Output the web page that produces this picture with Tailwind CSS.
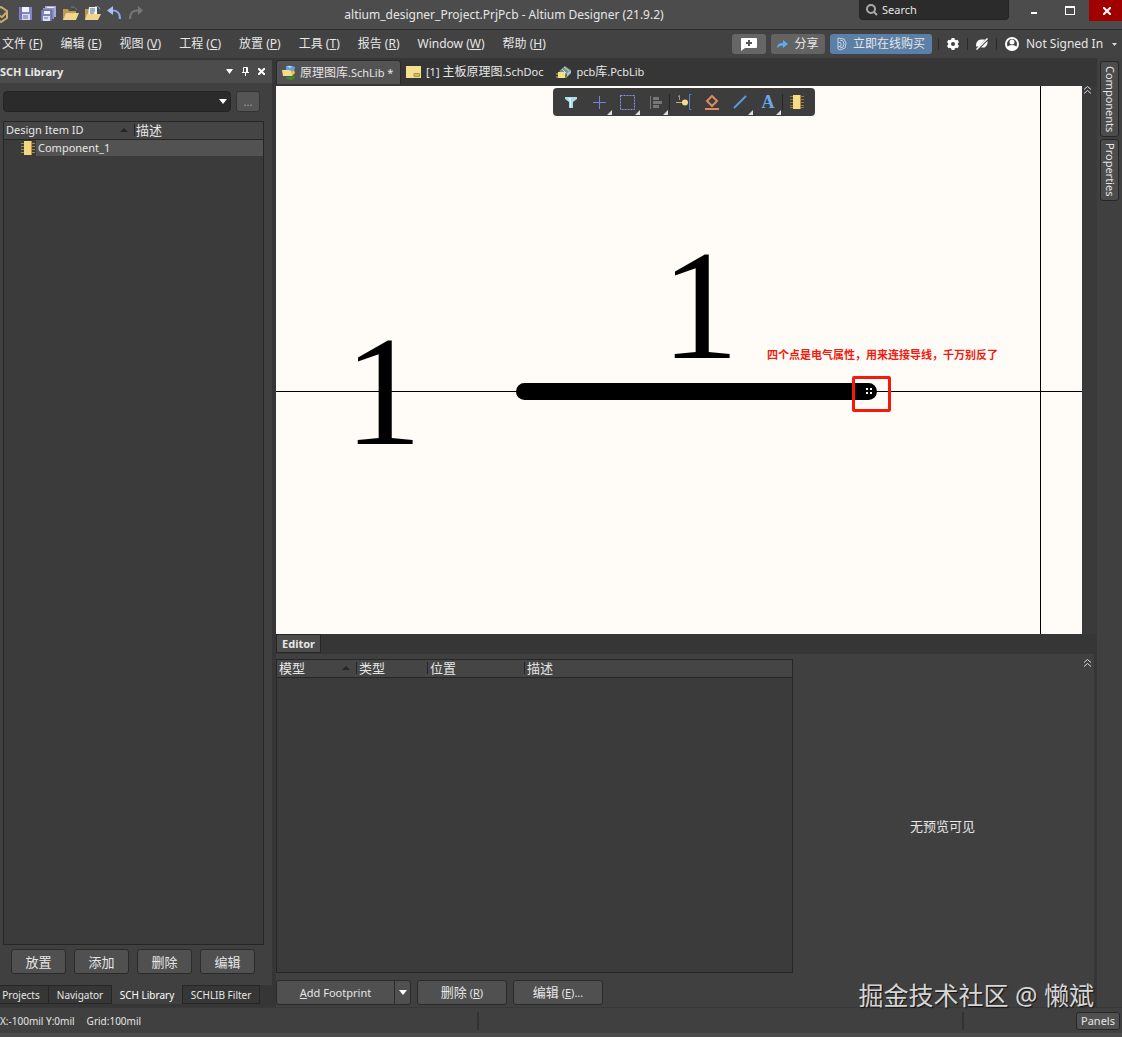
<!DOCTYPE html>
<html lang="zh-CN">
<head>
    <meta charset="UTF-8">
    <meta name="viewport" content="width=device-width, initial-scale=1.0">
    <title>altium_designer_Project.PrjPcb - Altium Designer (21.9.2)</title>
    <script src="https://cdn.jsdelivr.net/npm/@tailwindcss/browser@4"></script>
</head>
<body class="h-screen flex flex-col overflow-hidden bg-[#404040] text-[#e6e6e6] text-[11px] leading-4 font-['Noto_Sans','Noto_Sans_CJK_SC',sans-serif]">

    <!-- Title bar -->
    <header class="relative h-[30px] shrink-0 flex items-start justify-between bg-[#4c4c4c] border-b border-[#2c2c2c]">
        <div class="flex items-center h-7">
            <svg class="w-2 h-5 mr-[11px]" viewBox="0 0 8 20" fill="none" stroke="#c9ad6c" stroke-width="2"><path d="M-5 6 L1 3 L7 7 V14 L1 18 L-5 14 M-2 11 L2 13 L7 8"/></svg>
            <button aria-label="Save" class="w-[22px]"><svg class="size-4" viewBox="0 0 16 16"><path d="M0 1h13v13H0z" fill="#8286c4"/><path d="M3 1h7v5H3z" fill="#f4f4f8"/><path d="M3 8h8v6H3z" fill="#d9dcf0"/><path d="M4 10h5M4 12h5" stroke="#6668a5"/><path d="M2 1v12" stroke="#5d61a8"/></svg></button>
            <button aria-label="Save all" class="w-[22px]"><svg class="size-4" viewBox="0 0 16 16"><path d="M4 0h11v11H4z" fill="#a6a9da"/><path d="M6 1h7v2H6z" fill="#eef"/><path d="M2 2h11v11H2z" fill="#9094cf"/><path d="M0 4h11v11H0z" fill="#7c80c2" stroke="#4b4c77" stroke-width=".5"/><path d="M3 5h6v3H3z" fill="#f4f4f8"/><path d="M2 10h7v5H2z" fill="#dde0f2"/><path d="M3 12h4" stroke="#6668a5"/></svg></button>
            <button aria-label="Open" class="w-[22px]"><svg class="size-4" viewBox="0 0 16 16"><path d="M0 3h5l1 2h7v9H0z" fill="#b9985a"/><path d="M3 7h13l-3 7H0z" fill="#f0d58e"/><path d="M8 1q4-1 6 3" fill="none" stroke="#63809c"/></svg></button>
            <button aria-label="Open project" class="w-[22px]"><svg class="size-4" viewBox="0 0 16 16"><path d="M0 3h4v11H0z" fill="#b9985a"/><path d="M4 1h8v9H3z" fill="#f2f4f6"/><path d="M5 3h5M5 5h5M5 7h4" stroke="#567"/><path d="M2 8h14l-3 6H0z" fill="#f0d58e"/><path d="M10 .5q4-1 5 3" fill="none" stroke="#7aa5d0"/></svg></button>
            <button aria-label="Undo" class="w-[22px]"><svg class="size-4" viewBox="0 0 16 16" fill="none"><path d="M4 4.500q9-1 9 8.500" stroke="#88a9ee" stroke-width="2"/><path d="M0 4.500L6 0v9z" fill="#a9bff5"/></svg></button>
            <button aria-label="Redo" class="w-[22px]"><svg class="size-4" viewBox="0 0 16 16" fill="none"><path d="M10 4.500q-9-1-9 8.500" stroke="#777" stroke-width="2"/><path d="M14 4.500L9 0v9z" fill="#777"/></svg></button>
        </div>
        <h1 class="absolute inset-x-0 top-[6px] mx-auto w-fit pr-[114px] text-[12px] leading-[18px] whitespace-nowrap">altium_designer_Project.PrjPcb - Altium Designer (21.9.2)</h1>
        <div class="flex">
            <label class="flex items-center gap-1 w-[150px] h-5 pl-[6px] pr-2 rounded-b bg-[#2b2b2b] border border-t-0 border-[#242424]">
                <svg class="size-3 shrink-0" viewBox="0 0 12 12" fill="none" stroke="#aaa"><circle cx="5" cy="5" r="4" stroke-width="2"/><path d="M8 8l3 3" stroke-width="2"/></svg>
                <input type="text" aria-label="Search" placeholder="Search" class="w-full bg-transparent outline-none placeholder:text-[#e6e6e6]">
            </label>
            <button aria-label="Minimize" class="ml-[7px] w-9 h-[21px] flex justify-center items-end pb-[7px]"><span class="w-[6px] h-[2px] bg-white"></span></button>
            <button aria-label="Maximize" class="w-9 h-[21px] mr-px flex justify-center items-center"><span class="w-[10px] h-[9px] border border-t-2 border-white"></span></button>
            <button aria-label="Close" class="w-[33px] h-[21px] flex justify-center items-center bg-[#a00000]"><svg class="w-2 h-2 ml-[2px]" viewBox="0 0 8 8" stroke="#fff" stroke-width="2"><path d="M0 0l8 8M8 0l-8 8"/></svg></button>
        </div>
    </header>

    <!-- Menu bar -->
    <div class="h-[28px] shrink-0 flex items-center justify-between bg-[#424242] text-[12px]">
        <nav class="flex gap-[18px] pl-[2px] whitespace-nowrap">
            <button>文件 (<u>F</u>)</button>
            <button>编辑 (<u>E</u>)</button>
            <button>视图 (<u>V</u>)</button>
            <button>工程 (<u>C</u>)</button>
            <button>放置 (<u>P</u>)</button>
            <button>工具 (<u>T</u>)</button>
            <button>报告 (<u>R</u>)</button>
            <button>Window (<u>W</u>)</button>
            <button>帮助 (<u>H</u>)</button>
        </nav>
        <div class="flex items-center pr-[5px] whitespace-nowrap">
            <button aria-label="Comment" class="w-[34px] h-5 mr-[5px] flex items-center justify-center rounded-[3px] bg-[#666]"><svg class="w-4 h-[13px]" viewBox="0 0 16 13"><path d="M1 0h14a1 1 0 0 1 1 1v8a1 1 0 0 1-1 1H4l-4 3V1a1 1 0 0 1 1-1z" fill="#fff"/><path d="M8 2v6M5 5h6" stroke="#555" stroke-width="2"/></svg></button>
            <button class="w-[54px] h-5 mr-[5px] flex items-center justify-center gap-[6px] rounded-[3px] bg-[#636363]"><svg class="w-[11px] h-[10px]" viewBox="0 0 11 10"><path d="M0 9q0-5 6-5V1l5 4-5 4V6.500q-4 0-6 2.500z" fill="#5aaef0"/></svg>分享</button>
            <button class="w-[102px] h-5 mr-[6px] flex items-center justify-center gap-[6px] rounded-[3px] bg-[#5b7fa6]"><svg class="w-[10px] h-[14px]" viewBox="0 0 10 14" fill="none" stroke="#c3d3e4"><path d="M1 1l6 1 2 4-1 5-5 2-2-1zM3 3l3 1 1 3-1 3-3 1M1 5l3 1v3l-3 1"/></svg>立即在线购买</button>
            <span class="w-px h-3 bg-[#2b2b2b]"></span>
            <button aria-label="Settings" class="w-7 flex justify-center"><svg class="size-3" viewBox="0 0 12 12"><path d="M4.600 0h2.800l.4 1.600 1.300.7 1.500-.5L12 4.200l-1.200 1.100v1.400L12 7.800l-1.400 2.400-1.500-.5-1.300.7-.4 1.600H4.600l-.4-1.600-1.300-.7-1.500.5L0 7.800l1.200-1.100V5.300L0 4.200l1.400-2.400 1.500.5 1.300-.7z" fill="#fff"/><circle cx="6" cy="6" r="2" fill="#424242"/></svg></button>
            <span class="w-px h-3 bg-[#2b2b2b]"></span>
            <button aria-label="Notifications" class="w-7 flex justify-center"><svg class="w-[14px] h-3" viewBox="0 0 14 12"><path d="M1 8q0-6 5-6.500h4L4 8.500H1zM12.500 3q.5 4-3 6.500H6z" fill="#fff"/><path d="M1.500 11.500l11-11" stroke="#fff" stroke-width="1.500"/></svg></button>
            <span class="w-px h-3 bg-[#2b2b2b]"></span>
            <button class="flex items-center pl-2"><svg class="size-[14px] mr-[7px]" viewBox="0 0 14 14"><circle cx="7" cy="7" r="6" fill="none" stroke="#fff" stroke-width="2"/><circle cx="7" cy="5" r="2.500" fill="#fff"/><path d="M2 11q1-3 5-3t5 3l-5 3z" fill="#fff"/></svg><span class="w-[82px] text-left">Not Signed In</span><svg class="w-[5px] h-[3px] ml-1" viewBox="0 0 5 3"><path d="M0 0h5L2.500 3z" fill="#ddd"/></svg></button>
        </div>
    </div>

    <div class="flex-1 min-h-0 flex bg-[#363636]">
        <!-- SCH Library panel -->
        <aside class="w-[272px] shrink-0 mt-[2px] flex flex-col bg-[#404040]">
            <div class="h-[23px] shrink-0 flex items-center bg-[#4c4c4c] font-bold">
                <h2 class="flex-1">SCH Library</h2>
                <button aria-label="Panel menu" class="w-4"><svg class="w-[7px] h-[5px]" viewBox="0 0 7 5"><path d="M0 0h7L3.500 5z" fill="#fff"/></svg></button>
                <button aria-label="Pin" class="w-4"><svg class="w-[7px] h-[9px]" viewBox="0 0 7 9" fill="none" stroke="#fff"><path d="M1.500 5V.5h4V5M0 5.500h7M3.500 6v3M4.500 1v4"/></svg></button>
                <button aria-label="Close panel" class="w-[14px]"><svg class="w-[7px] h-[7px]" viewBox="0 0 7 7" stroke="#fff" stroke-width="2"><path d="M0 0l7 7M7 0L0 7"/></svg></button>
            </div>
            <div class="flex gap-[5px] pl-[3px] pr-3 pt-2 pb-[9px]">
                <div class="relative flex-1">
                    <select aria-label="Library filter" class="block w-full h-[21px] appearance-none rounded bg-[#2b2b2b] border border-[#242424]"><option></option></select>
                    <svg class="absolute right-1 top-2 w-2 h-[5px] pointer-events-none" viewBox="0 0 8 5"><path d="M0 0h8L4 5z" fill="#fff"/></svg>
                </div>
                <button class="w-6 h-[21px] rounded-[3px] bg-[#555] border border-[#333] text-[#aaa]">...</button>
            </div>
            <div class="flex-1 ml-[3px] mr-2 border border-[#262626] bg-[#3b3b3b]">
                <table class="w-full table-fixed border-collapse text-left">
                    <thead class="bg-[#454545] border-b border-[#262626]">
                        <tr class="h-[17px]">
                            <th class="w-[130px] p-0 pl-[2px] font-normal"><div class="flex items-center justify-between pr-[6px]">Design Item ID <svg class="w-2 h-1" viewBox="0 0 8 4"><path d="M0 4h8L4 0z" fill="#262626"/></svg></div></th>
                            <th class="p-0 font-normal text-[13px] leading-4"><div class="flex items-center"><span class="w-px h-3 mr-[1px] bg-[#262626]"></span>描述</div></th>
                        </tr>
                    </thead>
                    <tbody>
                        <tr class="h-[17px]">
                            <td colspan="2" class="p-0 pl-[17px]"><div class="flex items-center"><svg class="w-[14px] h-[14px]" viewBox="0 0 14 14"><path d="M0 2.500h14M0 5.500h14M0 8.500h14M0 11.500h14" stroke="#a3883f"/><path d="M3 0h8v14H3z" fill="#f3d681"/><path d="M10 0h1v14h-1z" fill="#c0903c"/></svg><span class="flex-1 ml-[1px] pl-[2px] bg-[#525252]">Component_1</span></div></td>
                        </tr>
                    </tbody>
                </table>
            </div>
            <div class="flex gap-2 pl-[11px] pt-1 pb-[11px] text-[13px]">
                <button class="w-[55px] h-[25px] rounded-[3px] bg-[#505050] border border-[#2a2a2a]">放置</button>
                <button class="w-[55px] h-[25px] rounded-[3px] bg-[#505050] border border-[#2a2a2a]">添加</button>
                <button class="w-[55px] h-[25px] rounded-[3px] bg-[#505050] border border-[#2a2a2a]">删除</button>
                <button class="w-[55px] h-[25px] rounded-[3px] bg-[#505050] border border-[#2a2a2a]">编辑</button>
            </div>
            <div class="h-[22px] shrink-0 flex items-start bg-[#363636] text-[10px] leading-[18px] whitespace-nowrap">
                <button class="w-[49px] h-[19px] pr-[6px] bg-[#363636] border border-l-0 border-[#262626]">Projects</button>
                <button class="w-[63px] h-[19px] bg-[#363636] border border-l-0 border-[#262626]">Navigator</button>
                <button class="w-[70px] h-[19px] bg-[#404040] text-white">SCH Library</button>
                <button class="w-[78px] h-[19px] bg-[#363636] border border-[#262626]">SCHLIB Filter</button>
            </div>
        </aside>

        <!-- Document area -->
        <main class="flex-1 min-w-0 ml-1 flex flex-col">
            <div class="h-[28px] shrink-0 flex items-end pb-[2px] whitespace-nowrap">
                <button class="w-[125px] h-[24px] pl-[5px] flex items-center rounded-t-[3px] bg-[#535353] border border-b-0 border-[#2a2a2a]"><svg class="w-4 h-4 mr-[2px]" viewBox="0 0 16 16"><path d="M4 1q5-1 9 1 0 4-4 5L4 5z" fill="#5fa3e6"/><path d="M5 1h5l-2 2z" fill="#c4e0f8"/><path d="M0 5h8l2 2v4H1z" fill="#f3dc8a"/><path d="M9 7l3-2 1 3-3 3z" fill="#e9c63d"/><path d="M4 12l9-1q0 3-4 4-4 0-5-3z" fill="#3b8a2e"/></svg><span><span class="text-[12px]">原理图库</span>.SchLib *</span></button>
                <button class="h-[24px] pl-[5px] flex items-center"><svg class="w-[15px] h-3 mr-[5px]" viewBox="0 0 15 12"><path d="M0 0h15v12H0z" fill="#f4e08d"/><path d="M8 7.500h5.500v3H8zM8 9h5" fill="none" stroke="#b09445"/></svg><span>[1] <span class="text-[12px]">主板原理图</span>.SchDoc</span></button>
                <button class="h-[24px] pl-[13px] flex items-center"><svg class="w-4 h-4 mr-1" viewBox="0 0 16 16"><path d="M3 7l6-5 6 4-5 6z" fill="#6f918d"/><path d="M6 5l4 4M8 3l5 4" stroke="#cfdeda"/><path d="M11 9l4-3v3l-4 4z" fill="#adc2c5"/><path d="M2 8h7v6H2z" fill="#f5df82"/><path d="M0 10h2M0 13h2M9 13h2" stroke="#d9b94d"/></svg><span>pcb<span class="text-[12px]">库</span>.PcbLib</span></button>
            </div>
            <div class="flex-[548] min-h-0 flex">
                <!-- Schematic symbol sheet -->
                <div class="relative flex-1 overflow-hidden bg-[#fffcf8] text-black">
                    <div class="absolute inset-x-0 top-[305px] h-px bg-black"></div>
                    <div class="absolute inset-y-0 left-[764px] w-px bg-black"></div>
                    <div class="absolute left-[240px] top-[297px] w-[361px] h-[17px] rounded-full bg-black"></div>
                    <div class="absolute left-[68px] top-[220px] text-[156px] leading-[172px] font-['Liberation_Serif',serif]">1</div>
                    <div class="absolute left-[385px] top-[134px] text-[156px] leading-[172px] font-['Liberation_Serif',serif]">1</div>
                    <svg class="absolute left-[590px] top-[302px] w-[7px] h-[7px]" viewBox="0 0 7 7" fill="#fff"><path d="M0 0h2v2H0zM4 0h2v2H4zM0 4h2v2H0zM4 4h2v2H4z"/></svg>
                    <div class="absolute left-[576px] top-[290px] w-[39px] h-9 rounded-xs border-3 border-[#f51b0c]"></div>
                    <p class="absolute left-[491px] top-[261px] text-[11px] font-bold text-[#ee1c12] whitespace-nowrap">四个点是电气属性，用来连接导线，千万别反了</p>
                    <div class="absolute left-[277px] top-[2px] w-[262px] h-[28px] pl-1 flex items-center rounded bg-[#3d3d3d]">
                        <button aria-label="Filter" class="w-7 h-7 flex items-center justify-center"><svg class="w-[14px] h-[13px]" viewBox="0 0 14 13"><path d="M1 1h12v2L9 6v6H5V6L1 3z" fill="#a9dce9"/><path d="M4 2h3v9H6V5z" fill="#def5fa"/></svg></button>
                        <button aria-label="Move" class="relative w-7 h-7 flex items-center justify-center"><svg class="w-[14px] h-[14px]" viewBox="0 0 14 14" stroke="#6f86d8"><path d="M7.500 1v13M1 7.500h13"/></svg><svg class="absolute right-[1px] bottom-[1px] w-[5px] h-[5px]" viewBox="0 0 5 5"><path d="M5 0v5H0z" fill="#ddd"/></svg></button>
                        <button aria-label="Select" class="relative w-7 h-7 flex items-center justify-center"><svg class="w-[15px] h-[15px]" viewBox="0 0 15 15" fill="none" stroke="#8b94f0"><path d="M.5.5h14v14H.5z" stroke-dasharray="2 1"/></svg><svg class="absolute right-[1px] bottom-[1px] w-[5px] h-[5px]" viewBox="0 0 5 5"><path d="M5 0v5H0z" fill="#ddd"/></svg></button>
                        <button aria-label="Align" class="relative w-7 h-7 flex items-center justify-center"><svg class="w-[13px] h-[13px]" viewBox="0 0 13 13" fill="none" stroke="#777"><path d="M1.500 0v13"/><path d="M4 2.500h6M4 6.500h9M4 10.500h6" stroke-width="3"/></svg><svg class="absolute right-[1px] bottom-[1px] w-[5px] h-[5px]" viewBox="0 0 5 5"><path d="M5 0v5H0z" fill="#ddd"/></svg></button>
                        <span class="w-px h-4 bg-[#252525]"></span>
                        <button aria-label="Place pin" class="w-7 h-7 flex items-center justify-center"><svg class="w-4 h-4" viewBox="0 0 16 16" fill="none"><path d="M2 2.500l1.500-1V6" stroke="#999"/><path d="M0 8.500h8" stroke="#c8b270"/><path d="M15.500.5h-2v15h2" stroke="#5383d0"/><circle cx="9" cy="8.500" r="3" fill="#f5d991"/></svg></button>
                        <button aria-label="Place directive" class="w-7 h-7 flex items-center justify-center"><svg class="w-[14px] h-[16px]" viewBox="0 0 14 16" fill="none" stroke="#e08a62" stroke-width="2"><path d="M7 2l5 5-5 5-5-5zM0 15h14"/></svg></button>
                        <button aria-label="Place line" class="relative w-7 h-7 flex items-center justify-center"><svg class="w-[14px] h-[14px]" viewBox="0 0 14 14" stroke="#579be0" stroke-width="2"><path d="M1 13L13 1"/></svg><svg class="absolute right-[1px] bottom-[1px] w-[5px] h-[5px]" viewBox="0 0 5 5"><path d="M5 0v5H0z" fill="#ddd"/></svg></button>
                        <button aria-label="Place text" class="relative w-7 h-7 text-[18px] leading-7 font-bold text-[#6ba7ec] font-['Liberation_Serif',serif]">A<svg class="absolute right-[1px] bottom-[1px] w-[5px] h-[5px]" viewBox="0 0 5 5"><path d="M5 0v5H0z" fill="#ddd"/></svg></button>
                        <span class="w-px h-4 bg-[#252525]"></span>
                        <button aria-label="Place part" class="w-7 h-7 flex items-center justify-center"><svg class="w-[14px] h-[14px]" viewBox="0 0 14 14"><path d="M0 1.500h14M0 4.500h14M0 7.500h14M0 10.500h14M0 12.500h14" stroke="#8b7947"/><path d="M3 0h8v14H3z" fill="#f5dd88"/><path d="M10 0h1v14h-1z" fill="#b38b3c"/></svg></button>
                    </div>
                </div>
                <div class="w-[15px] flex justify-center items-start pr-1 bg-[#3a3a3a]">
                    <button aria-label="Collapse"><svg class="w-[7px] h-2" viewBox="0 0 7 8" fill="none" stroke="#ddd"><path d="M0 3.500l3.500-3 3.500 3M0 7.500l3.500-3 3.500 3"/></svg></button>
                </div>
            </div>
            <div class="h-[20px] shrink-0 mr-[15px] flex items-start"><button class="w-[45px] h-[19px] bg-[#4c4c4c] border border-[#262626] font-bold">Editor</button></div>
            <!-- Model editor -->
            <div class="flex-[353] min-h-0 mr-[3px] flex bg-[#404040]">
                <div class="w-[517px] shrink-0 flex flex-col pt-[5px]">
                    <div class="flex-1 border border-[#262626] bg-[#3b3b3b]">
                        <table class="w-full table-fixed border-collapse text-left text-[13px] leading-4">
                            <thead class="bg-[#454545] border-b border-[#262626]">
                                <tr class="h-[17px]">
                                    <th class="w-[79px] p-0 pl-[2px] font-normal"><div class="flex items-center justify-between pr-[6px]">模型 <svg class="w-2 h-1" viewBox="0 0 8 4"><path d="M0 4h8L4 0z" fill="#262626"/></svg></div></th>
                                    <th class="w-[71px] p-0 font-normal"><div class="flex items-center"><span class="w-px h-3 mr-[2px] bg-[#262626]"></span>类型</div></th>
                                    <th class="w-[97px] p-0 font-normal"><div class="flex items-center"><span class="w-px h-3 mr-[2px] bg-[#262626]"></span>位置</div></th>
                                    <th class="p-0 font-normal"><div class="flex items-center"><span class="w-px h-3 mr-[2px] bg-[#262626]"></span>描述</div></th>
                                </tr>
                            </thead>
                        </table>
                    </div>
                    <div class="flex gap-[6px] pt-[7px] pb-[2px]">
                        <div class="flex w-[135px] h-[25px] rounded-[3px] bg-[#505050] border border-[#2a2a2a]">
                            <button class="flex-1"><u>A</u>dd Footprint</button>
                            <button aria-label="More footprint actions" class="w-4 flex items-center justify-center border-l border-[#2a2a2a]"><svg class="w-2 h-[5px]" viewBox="0 0 8 5"><path d="M0 0h8L4 5z" fill="#fff"/></svg></button>
                        </div>
                        <button class="w-[90px] h-[25px] rounded-[3px] bg-[#505050] border border-[#2a2a2a]"><span class="text-[13px]">删除</span> (<u>R</u>)</button>
                        <button class="w-[90px] h-[25px] rounded-[3px] bg-[#505050] border border-[#2a2a2a]"><span class="text-[13px]">编辑</span> (<u>E</u>)...</button>
                    </div>
                </div>
                <div class="relative flex-1 flex items-center justify-center text-[13px]">
                    <p class="pr-[2px] pb-[10px]">无预览可见</p>
                    <button aria-label="Collapse preview" class="absolute right-[3px] top-[5px]"><svg class="w-[7px] h-2" viewBox="0 0 7 8" fill="none" stroke="#ddd"><path d="M0 3.500l3.500-3 3.500 3M0 7.500l3.500-3 3.500 3"/></svg></button>
                    <p class="absolute right-0 bottom-0 text-[25px] leading-6 text-[#d6d6d6] whitespace-nowrap text-shadow-[1px_1px_1px_#111]">掘金技术社区 @ 懒斌</p>
                </div>
            </div>
        </main>

        <!-- Side tabs -->
        <div class="w-[25px] shrink-0 pt-[3px] pl-[3px] flex flex-col gap-[2px] bg-[#404040]">
            <button class="w-[19px] h-[76px] rounded-[3px] bg-[#4c4c4c] border border-[#262626] [writing-mode:vertical-rl]">Components</button>
            <button class="w-[19px] h-[62px] rounded-[3px] bg-[#4c4c4c] border border-[#262626] [writing-mode:vertical-rl]">Properties</button>
        </div>
    </div>

    <!-- Status bar -->
    <footer class="h-[30px] shrink-0 flex items-center bg-[#404040] border-t border-[#383838] border-b-4 border-b-[#4c4c4c] text-[10px]">
        <div class="flex-[478] min-w-0 flex gap-3 whitespace-nowrap"><span>X:-100mil Y:0mil</span><span>Grid:100mil</span></div>
        <span class="w-[2px] h-[18px] bg-[#323232]"></span>
        <div class="flex-[484]"></div>
        <span class="w-[2px] h-[18px] bg-[#323232]"></span>
        <div class="flex-[156] flex justify-end pr-[2px]"><button class="w-11 h-[18px] rounded-[3px] bg-[#505050] border border-[#262626] text-[11px] leading-4">Panels</button></div>
    </footer>

</body>
</html>
